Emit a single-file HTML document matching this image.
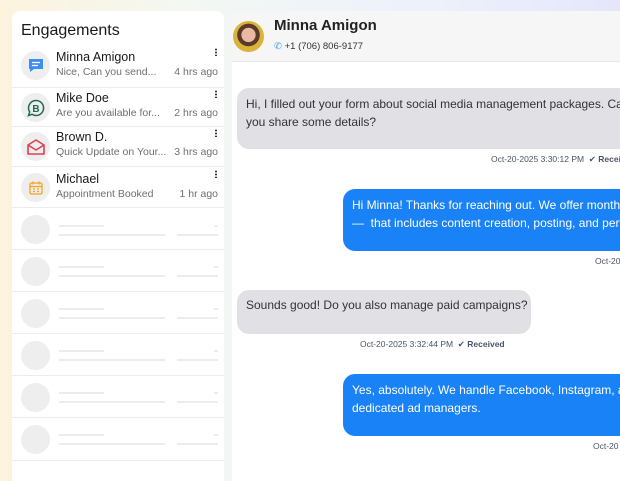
<!DOCTYPE html>
<html><head><style>
*{margin:0;padding:0;box-sizing:border-box}
body{width:620px;height:470px;overflow:hidden;font-family:"Liberation Sans",sans-serif;background:linear-gradient(90deg,#fdf3dd 0%,#f3f8f3 30%,#eef0fb 70%,#e6e6fb 100%);position:relative}
.left{position:absolute;left:12px;top:11px;width:212px;height:470px;background:#fff;border-radius:8px 8px 0 0}
.title{position:absolute;left:9px;top:11px;font-size:16px;color:#1a1a1a}
.row{position:absolute;left:0;width:212px;border-bottom:1px solid #ececec}
.ic{position:absolute;left:9px;width:29px;height:29px;border-radius:50%;background:#eeeeee;display:flex;align-items:center;justify-content:center}
.nm{position:absolute;left:44px;font-size:12.5px;color:#1a1a1a}
.sb{position:absolute;left:44px;font-size:10.5px;color:#6f6f6f}
.tm{position:absolute;right:6px;font-size:10.5px;color:#6f6f6f}
.kb{position:absolute;right:7px;width:2px;height:8px;background:radial-gradient(circle,#333 0.9px,transparent 1.1px) 0 0/2px 3px}
.sk .l1{position:absolute;left:47px;width:45px;height:2px;background:#ececec}
.sk .l2{position:absolute;left:47px;width:106px;height:2px;background:#ececec}
.sk .l3{position:absolute;left:165px;width:41px;height:2px;background:#ececec}
.sk .l4{position:absolute;left:202px;width:4px;height:2px;background:#ececec}
.right{position:absolute;left:232px;top:11px;width:400px;height:470px;background:#fff;border-radius:6px 0 0 0}
.hdr{position:absolute;left:0;top:0;width:400px;height:51px;background:#f6f6f7;border-bottom:1px solid #e6e6e6;border-radius:6px 0 0 0}
.bub{position:absolute;font-size:12px;line-height:18px;padding:0 9px;border-radius:12px;white-space:nowrap;overflow:hidden}
.g{background:#e1e1e5;color:#333}
.b{background:#1a82f7;color:#fff}
.ts{position:absolute;font-size:8.5px;color:#4a5468;white-space:nowrap}
.ts b{color:#4a5468}
</style></head><body>
<div class="left">
<div class="title">Engagements</div>
<div class="row" style="top:34px;height:43px">
 <div class="ic" style="top:6px"><svg width="18" height="17" viewBox="0 0 18 17"><path d="M2 2h14v10H7l-4 3v-3H2z" fill="#3d8ef0"/><path d="M5 5.5h8M5 8.5h6" stroke="#fff" stroke-width="1.3"/></svg></div>
 <div class="nm" style="top:5px">Minna Amigon</div><div class="sb" style="top:21px">Nice, Can you send...</div><div class="tm" style="top:21px">4 hrs ago</div><div class="kb" style="top:3px"></div></div>
<div class="row" style="top:77px;height:39px">
 <div class="ic" style="top:5px"><svg width="20" height="20" viewBox="0 0 20 20"><path d="M10 2.5a7.5 7.5 0 1 1-4 13.8L2.5 17.5l1.2-3.5A7.5 7.5 0 0 1 10 2.5z" fill="none" stroke="#1e6b4f" stroke-width="1.5"/><text x="10" y="14" font-size="10" text-anchor="middle" fill="#1e6b4f" font-family="Liberation Sans" font-weight="bold">B</text></svg></div>
 <div class="nm" style="top:3px">Mike Doe</div><div class="sb" style="top:19px">Are you available for...</div><div class="tm" style="top:19px">2 hrs ago</div><div class="kb" style="top:2px"></div></div>
<div class="row" style="top:116px;height:40px">
 <div class="ic" style="top:5px"><svg width="20" height="18" viewBox="0 0 20 18"><path d="M2 7l8-5 8 5v9H2z M2 7l8 5 8-5" fill="none" stroke="#e0404e" stroke-width="1.6" stroke-linejoin="round"/></svg></div>
 <div class="nm" style="top:3px">Brown D.</div><div class="sb" style="top:19px">Quick Update on Your...</div><div class="tm" style="top:19px">3 hrs ago</div><div class="kb" style="top:2px"></div></div>
<div class="row" style="top:156px;height:41px">
 <div class="ic" style="top:6px"><svg width="16" height="16" viewBox="0 0 16 16"><rect x="2" y="3" width="12" height="11" rx="1.5" fill="none" stroke="#f4a31c" stroke-width="1.3"/><path d="M5 1.5v3M11 1.5v3M2 6.5h12M5 9h2M9 9h2M5 11.5h2M9 11.5h2" stroke="#f4a31c" stroke-width="1.2"/></svg></div>
 <div class="nm" style="top:5px">Michael</div><div class="sb" style="top:21px">Appointment Booked</div><div class="tm" style="top:21px">1 hr ago</div><div class="kb" style="top:3px"></div></div>
<div class="row sk" style="top:197px;height:42px"><div class="ic" style="top:7px"></div><div class="l1" style="top:17px"></div><div class="l2" style="top:26px"></div><div class="l3" style="top:26px"></div><div class="l4" style="top:17px"></div></div>
<div class="row sk" style="top:239px;height:42px"><div class="ic" style="top:7px"></div><div class="l1" style="top:16px"></div><div class="l2" style="top:25px"></div><div class="l3" style="top:25px"></div><div class="l4" style="top:16px"></div></div>
<div class="row sk" style="top:281px;height:42px"><div class="ic" style="top:7px"></div><div class="l1" style="top:16px"></div><div class="l2" style="top:25px"></div><div class="l3" style="top:25px"></div><div class="l4" style="top:16px"></div></div>
<div class="row sk" style="top:323px;height:42px"><div class="ic" style="top:7px"></div><div class="l1" style="top:16px"></div><div class="l2" style="top:25px"></div><div class="l3" style="top:25px"></div><div class="l4" style="top:16px"></div></div>
<div class="row sk" style="top:365px;height:42px"><div class="ic" style="top:7px"></div><div class="l1" style="top:16px"></div><div class="l2" style="top:25px"></div><div class="l3" style="top:25px"></div><div class="l4" style="top:16px"></div></div>
<div class="row sk" style="top:407px;height:43px"><div class="ic" style="top:7px"></div><div class="l1" style="top:16px"></div><div class="l2" style="top:25px"></div><div class="l3" style="top:25px"></div><div class="l4" style="top:16px"></div></div>
</div>
<div class="right">
<div class="hdr">
 <div style="position:absolute;left:1px;top:10px;width:31px;height:31px;border-radius:50%;background:radial-gradient(circle at 50% 45%,#e9b9a3 0 30%,#5a3a2a 32% 48%,#d9b33a 50%)"></div>
 <div style="position:absolute;left:42px;top:6px;font-size:15px;font-weight:bold;color:#222">Minna Amigon</div>
 <div style="position:absolute;left:42px;top:30px;font-size:9.5px;color:#333"><span style="color:#3aa0f0">✆</span> +1 (706) 806-9177</div>
</div>
<div class="bub g" style="left:5px;top:77px;width:400px;height:61px;padding-top:7px">Hi, I filled out your form about social media management packages. Can<br>you share some details?</div>
<div class="ts" style="left:259px;top:143px">Oct-20-2025 3:30:12 PM &nbsp;✔ <b>Received</b></div>
<div class="bub b" style="left:111px;top:178px;width:300px;height:62px;padding-top:7px">Hi Minna! Thanks for reaching out. We offer monthly<br>— &nbsp;that includes content creation, posting, and perf</div>
<div class="ts" style="left:363px;top:245px">Oct-20</div>
<div class="bub g" style="left:5px;top:279px;width:294px;height:44px;padding-top:6px">Sounds good! Do you also manage paid campaigns?</div>
<div class="ts" style="left:128px;top:328px">Oct-20-2025 3:32:44 PM &nbsp;✔ <b>Received</b></div>
<div class="bub b" style="left:111px;top:363px;width:300px;height:62px;padding-top:7px">Yes, absolutely. We handle Facebook, Instagram, a<br>dedicated ad managers.</div>
<div class="ts" style="left:361px;top:430px">Oct-20</div>
</div>
</body></html>
